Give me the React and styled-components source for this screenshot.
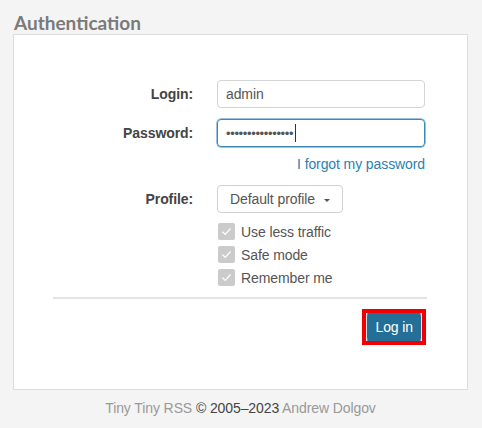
import React from "react";
import styled, { createGlobalStyle } from "styled-components";

const Global = createGlobalStyle`
  html, body { margin: 0; padding: 0; background: #f4f4f4; }
  body { font-family: "Liberation Sans", Arial, sans-serif; font-size: 14px; color: #555; letter-spacing: -0.1px; }
  * { box-sizing: border-box; }
`;

const Page = styled.div`
  padding: 8px 0 0 13px;
  width: 468px;
`;

const Title = styled.h1`
  margin: 0;
  font-family: Lato, "Open Sans", sans-serif;
  font-weight: 700;
  font-size: 19px;
  line-height: 29px;
  letter-spacing: 0;
  color: #7a7a7a;
  padding-left: 1px;
  height: 26px;
  overflow: visible;
`;

const Panel = styled.div`
  width: 455px;
  height: 356px;
  background: #fff;
  border: 1px solid #dcdcdc;
  padding: 45px 39px 0 39px;
  display: flex;
  flex-direction: column;
`;

const Row = styled.div`
  display: flex;
  align-items: center;
  gap: 24px;
  margin-top: ${(p) => p.$mt || 0}px;
`;

const Label = styled.label`
  width: 140px;
  text-align: right;
  font-weight: 700;
  color: #444;
  font-size: 14px;
`;

const Field = styled.div`
  width: 208px;
  height: 28px;
  border: 1px solid ${(p) => (p.$focused ? "#3e86b8" : "#d4d4d4")};
  border-radius: 4px;
  padding: 0 8px;
  display: flex;
  align-items: center;
  font-size: 14px;
  color: #555;
  box-shadow: ${(p) => (p.$focused ? "0 0 0 0.5px #3e86b8" : "none")};
`;

const Dots = styled.span`
  letter-spacing: -0.35px;
  font-size: 13px;
  color: #555;
`;

const Caret = styled.span`
  display: inline-block;
  width: 1px;
  height: 18px;
  background: #333;
  margin-left: 2px;
`;

const ForgotRow = styled.div`
  margin-top: 9px;
  padding-left: 164px;
  width: 372px;
  text-align: right;
  line-height: 17px;
`;

const Link = styled.a`
  color: #2a7fb3;
  text-decoration: none;
  font-size: 14px;
`;

const Select = styled.button`
  height: 28px;
  width: 126px;
  border: 1px solid #d0d0d0;
  border-radius: 4px;
  background: #fff;
  font-family: inherit;
  font-size: 14px;
  letter-spacing: -0.1px;
  color: #555;
  padding: 0 0 0 12px;
  display: flex;
  align-items: center;
  gap: 9px;
`;

const CaretDown = styled.span`
  width: 0;
  height: 0;
  border-left: 3px solid transparent;
  border-right: 3px solid transparent;
  border-top: 3px solid #555;
  margin-top: 2px;
`;

const Checks = styled.div`
  margin-top: 10px;
  padding-left: 165px;
  display: flex;
  flex-direction: column;
  gap: 6px;
`;

const Check = styled.div`
  display: flex;
  align-items: center;
  gap: 6px;
  height: 17px;
  font-size: 14px;
  color: #555;
`;

const Box = styled.span`
  width: 17px;
  height: 17px;
  border-radius: 2px;
  background: #cbcbcb;
  display: flex;
  align-items: center;
  justify-content: center;
`;

const Rule = styled.hr`
  margin: 11px 0 0 0;
  border: 0;
  border-top: 2px solid #e3e3e3;
  width: 374px;
`;

const Actions = styled.div`
  margin-top: 10px;
  display: flex;
  justify-content: flex-end;
  padding-right: 2px;
`;

const Highlight = styled.span`
  display: inline-flex;
  border: 4px solid #f00000;
`;

const Primary = styled.button`
  height: 28px;
  padding: 0 8px;
  background: #246f98;
  color: #fff;
  border: 1px solid #246f98;
  border-left-color: #e6e6e6;
  border-right-color: #e6e6e6;
  border-radius: 3px;
  font-family: inherit;
  font-size: 14px;
  letter-spacing: -0.1px;
`;

const Footer = styled.div`
  width: 455px;
  text-align: center;
  margin-top: 10px;
  line-height: 17px;
  font-size: 14px;
  color: #999;
`;

const Dark = styled.span`
  color: #444;
`;

const Tick = () => (
  <svg width="11" height="9" viewBox="0 0 11 9">
    <path d="M1.5 4.8 L4.2 7.3 L9.5 1.5" fill="none" stroke="#fff" strokeWidth="1.2" />
  </svg>
);

export default function App() {
  return (
    <>
      <Global />
      <Page>
        <Title>Authentication</Title>
        <Panel>
          <Row>
            <Label>Login:</Label>
            <Field>admin</Field>
          </Row>
          <Row $mt={11}>
            <Label>Password:</Label>
            <Field $focused>
              <Dots>{"•".repeat(16)}</Dots>
              <Caret />
            </Field>
          </Row>
          <ForgotRow>
            <Link href="#">I forgot my password</Link>
          </ForgotRow>
          <Row $mt={12}>
            <Label>Profile:</Label>
            <Select>
              Default profile <CaretDown />
            </Select>
          </Row>
          <Checks>
            {["Use less traffic", "Safe mode", "Remember me"].map((t) => (
              <Check key={t}>
                <Box>
                  <Tick />
                </Box>
                {t}
              </Check>
            ))}
          </Checks>
          <Rule />
          <Actions>
            <Highlight>
              <Primary>Log in</Primary>
            </Highlight>
          </Actions>
        </Panel>
        <Footer>
          Tiny Tiny RSS <Dark>© 2005–2023</Dark> Andrew Dolgov
        </Footer>
      </Page>
    </>
  );
}
